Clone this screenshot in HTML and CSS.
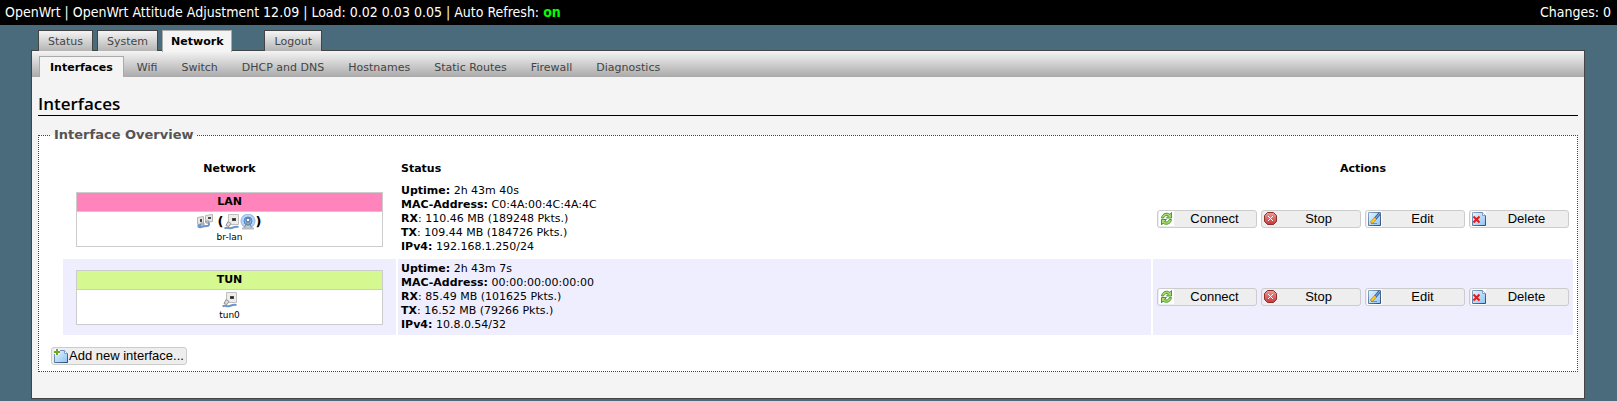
FILE: index.html
```
<!DOCTYPE html>
<html lang="en">
<head>
<meta charset="UTF-8">
<meta name="viewport" content="width=device-width, initial-scale=1.0">
<title>OpenWrt - Interfaces</title>
<link rel="stylesheet" href="styles.css">
</head>
<body>

<!-- icons -->
<svg class="defs" aria-hidden="true">
    <defs>
        <linearGradient id="sheet" x1="0" y1="0" x2="1" y2="1">
            <stop offset="0" stop-color="#e8f4fd"/>
            <stop offset="1" stop-color="#8cc4f4"/>
        </linearGradient>
        <linearGradient id="edge" x1="0" y1="0" x2="1" y2="1">
            <stop offset="0" stop-color="#8aa9cc"/>
            <stop offset="1" stop-color="#2d4a70"/>
        </linearGradient>
        <linearGradient id="red" x1="0" y1="0" x2="0" y2="1">
            <stop offset="0" stop-color="#ef9a96"/>
            <stop offset="1" stop-color="#cf3436"/>
        </linearGradient>
    </defs>
    <symbol id="reload" viewBox="0 0 16 16">
        <path fill="#fff" d="M0 0h15v15H0z"/>
        <path d="M2.500 7C3 3.500 6 1.500 9.500 2.500L11 3.500 12.500 1.500V7H7.500L9.500 5C7.500 4 5.500 4.500 4.500 7z" fill="#a5dc74" stroke="#4d9a2b"/>
        <path d="M12.500 8.500C12 12 9 14 5.500 13L4 12 2.500 14V8.500H7.500L5.500 10.500C7.500 11.500 9.500 11 10.500 8.500z" fill="#a5dc74" stroke="#4d9a2b"/>
    </symbol>
    <symbol id="stop" viewBox="0 0 16 16">
        <path d="M4.500 1.500h6l3 3v6l-3 3h-6l-3-3v-6z" fill="url(#red)" stroke="#8d3030"/>
        <path d="M5 5l5 5M10 5l-5 5" stroke="#fff"/>
    </symbol>
    <symbol id="edit" viewBox="0 0 16 16">
        <path fill="#fff" d="M0 0h15v16H0z"/>
        <path d="M1.500 1.500h12v13h-12z" fill="url(#sheet)" stroke="url(#edge)"/>
        <path d="M13 2L8 8" stroke="#3f6aa3" stroke-width="3"/>
        <path d="M13 2L8 8" stroke="#86b3e6"/>
        <path d="M8.500 7.500L4 12" stroke="#b67b15" stroke-width="3"/>
        <path d="M8.500 7.500L4.500 11.500" stroke="#ffc928" stroke-width="2"/>
        <path d="M4 12.500h6" stroke="#6d8fb5"/>
    </symbol>
    <symbol id="delete" viewBox="0 0 16 16">
        <path fill="#fff" d="M0 0h15v16H0z"/>
        <path d="M1.500 1.500h10l3 3v10h-13z" fill="url(#sheet)" stroke="url(#edge)"/>
        <path d="M11.500 1.500v3h3" fill="#fff" stroke="#7da0c8"/>
        <path d="M2.500 5.500l6 6M8.500 5.500l-6 6" stroke="#e01b1b" stroke-width="2"/>
    </symbol>
    <symbol id="add" viewBox="0 0 16 16">
        <path d="M1.500 2.500h10l3 3v9h-13z" fill="url(#sheet)" stroke="url(#edge)"/>
        <path d="M11.500 2.500v3h3" fill="#fff" stroke="#7da0c8"/>
        <path d="M4 1v6M1 4h6" stroke="#fff" stroke-width="4"/>
        <path d="M4 1v6M1 4h6" stroke="#6caa1f" stroke-width="2"/>
    </symbol>
    <symbol id="port" viewBox="0 0 16 16">
        <path d="M4.500.500h10v10h-10z" fill="#ececec" stroke="#c0c0c0"/>
        <path d="M8 4h4v3H8z" fill="#4b4b42"/>
        <path d="M9 5h2v1H9z" fill="#1b1b12"/>
        <path d="M4 7.500l3 2-2 3-3-1z" fill="#dcdcdc" stroke="#959595"/>
        <path d="M.500 14.500c3-2 4 .500 7-.500s4-1.500 7-1" fill="none" stroke="#6c95c9" stroke-width="2"/>
    </symbol>
    <symbol id="bridge" viewBox="0 0 16 16">
        <path d="M.500 3.500l6-1v7l-6 1zM8.500 1.500l7-1v7l-7 1z" fill="#e6e6e6" stroke="#b5b5b5"/>
        <path d="M3 5h2v3H3zM11 3h3v2h-3z" fill="#4b4b42"/>
        <path d="M4 9h3v2H4zM9 7h3v2H9z" fill="#ddd" stroke="#999"/>
        <path d="M4 11c-4 0-3 3 0 2s4-1 6-1 3-2 1-3" fill="none" stroke="#6c95c9" stroke-width="2"/>
    </symbol>
    <symbol id="wifi" viewBox="0 0 16 16">
        <circle cx="8" cy="7" r="7" fill="#b9d5f3" stroke="#8fb6e0"/>
        <circle cx="8" cy="7" r="4" fill="#89b3e3" stroke="#4f86c9"/>
        <circle cx="8" cy="6" r="2" fill="#fff" stroke="#2d62a8"/>
        <path d="M8 7L4 14M8 7l4 7M6 11h4" fill="none" stroke="#888"/>
        <path d="M2 14.500h12" stroke="#bbb" stroke-width="2"/>
    </symbol>
</svg>

<div class="header">
    <div>OpenWrt | OpenWrt Attitude Adjustment 12.09 | Load: 0.02 0.03 0.05 | Auto Refresh: <a href="#" class="refresh">on</a></div>
    <div>Changes: 0</div>
</div>

<ul class="mainmenu">
    <li><a href="#">Status</a></li>
    <li><a href="#">System</a></li>
    <li><a href="#" class="active">Network</a></li>
    <li class="logout"><a href="#">Logout</a></li>
</ul>

<div class="main">
    <ul class="submenu">
        <li><a href="#" class="active">Interfaces</a></li>
        <li><a href="#">Wifi</a></li>
        <li><a href="#">Switch</a></li>
        <li><a href="#">DHCP and DNS</a></li>
        <li><a href="#">Hostnames</a></li>
        <li><a href="#">Static Routes</a></li>
        <li><a href="#">Firewall</a></li>
        <li><a href="#">Diagnostics</a></li>
    </ul>

    <div class="content">
        <h2>Interfaces</h2>

        <fieldset>
            <legend>Interface Overview</legend>
            <table>
                <colgroup><col class="col-net"><col><col class="col-act"></colgroup>
                <tr>
                    <th>Network</th>
                    <th class="left">Status</th>
                    <th>Actions</th>
                </tr>
                <tr>
                    <td>
                        <div class="ifacebox">
                            <div class="ifacebox-head lan">LAN</div>
                            <div class="ifacebox-body">
                                <div class="devices"><svg><use href="#bridge"/></svg> <b>(</b><svg><use href="#port"/></svg><svg><use href="#wifi"/></svg><b>)</b></div>
                                <small>br-lan</small>
                            </div>
                        </div>
                    </td>
                    <td>
                        <b>Uptime:</b> 2h 43m 40s<br>
                        <b>MAC-Address:</b> C0:4A:00:4C:4A:4C<br>
                        <b>RX</b>: 110.46 MB (189248 Pkts.)<br>
                        <b>TX</b>: 109.44 MB (184726 Pkts.)<br>
                        <b>IPv4:</b> 192.168.1.250/24
                    </td>
                    <td>
                        <div class="actions">
                            <button type="button"><svg><use href="#reload"/></svg><span>Connect</span></button>
                            <button type="button"><svg><use href="#stop"/></svg><span>Stop</span></button>
                            <button type="button"><svg><use href="#edit"/></svg><span>Edit</span></button>
                            <button type="button"><svg><use href="#delete"/></svg><span>Delete</span></button>
                        </div>
                    </td>
                </tr>
                <tr class="alt">
                    <td>
                        <div class="ifacebox">
                            <div class="ifacebox-head tun">TUN</div>
                            <div class="ifacebox-body">
                                <div class="devices"><svg><use href="#port"/></svg></div>
                                <small>tun0</small>
                            </div>
                        </div>
                    </td>
                    <td>
                        <b>Uptime:</b> 2h 43m 7s<br>
                        <b>MAC-Address:</b> 00:00:00:00:00:00<br>
                        <b>RX</b>: 85.49 MB (101625 Pkts.)<br>
                        <b>TX</b>: 16.52 MB (79266 Pkts.)<br>
                        <b>IPv4:</b> 10.8.0.54/32
                    </td>
                    <td>
                        <div class="actions">
                            <button type="button"><svg><use href="#reload"/></svg><span>Connect</span></button>
                            <button type="button"><svg><use href="#stop"/></svg><span>Stop</span></button>
                            <button type="button"><svg><use href="#edit"/></svg><span>Edit</span></button>
                            <button type="button"><svg><use href="#delete"/></svg><span>Delete</span></button>
                        </div>
                    </td>
                </tr>
            </table>
            <button type="button" class="add"><svg><use href="#add"/></svg><span>Add new interface...</span></button>
        </fieldset>
    </div>
</div>

</body>
</html>
```
FILE: styles.css
```
body {
    margin: 0;
    background: #4a6b7c;
    color: #000;
    font: 11px/14px Verdana, "DejaVu Sans", sans-serif;
}
a {
    color: #444;
    text-decoration: none;
}
ul {
    display: flex;
    margin: 0;
    padding: 0;
    list-style: none;
}
svg {
    flex: none;
    width: 16px;
    height: 16px;
}
.defs {
    position: absolute;
    width: 0;
    height: 0;
}

/* header */
.header {
    display: flex;
    justify-content: space-between;
    padding: 0 6px 0 5px;
    background: #000;
    color: #fff;
    font: 14px/25px Tahoma, "DejaVu Sans Condensed", sans-serif;
}
.header .refresh {
    color: #0f0;
    font-weight: bold;
}

/* menus */
.mainmenu {
    position: relative;
    gap: 4px;
    margin: 5px 38px 0;
}
.mainmenu a {
    display: block;
    height: 20px;
    padding: 0 9px;
    border: 1px solid #444;
    border-bottom: 0;
    background: linear-gradient(#f4f4f4, #b4b4b4);
    line-height: 21px;
}
.mainmenu .active {
    margin-bottom: -1px;
    padding: 0 8px 1px;
    border-color: #aaa;
    background: #f4f4f4;
    color: #000;
    font-weight: bold;
}
.mainmenu .logout {
    margin-left: 28px;
}
.submenu {
    padding: 5px 7px 0;
    background: linear-gradient(#f4f4f4, #aaa);
}
.submenu a {
    display: block;
    height: 20px;
    padding: 0 8px;
    margin-right: 6px;
    border: 1px solid transparent;
    border-bottom: 0;
    line-height: 21px;
}
.submenu .active {
    margin-right: 4px;
    padding: 0 10px;
    border-color: #aaa;
    background: #f4f4f4;
    color: #000;
    font-weight: bold;
}

/* page */
.main {
    margin: -1px 32px 2px 31px;
    border: 1px solid #444;
    background: #f4f4f4;
}
.content {
    padding: 16px 6px 26px;
}
h2 {
    margin: 0 0 11px;
    border-bottom: 1px solid #000;
    font: 600 17px/22px "Trebuchet MS", "Open Sans", sans-serif;
}
fieldset {
    min-width: 0;
    margin: 0;
    padding: 5px 2px 6px 12px;
    border: 1px dotted #444;
    background: #fff;
}
legend {
    padding: 0 3px;
    color: #555;
    font-size: 13px;
    font-weight: bold;
    line-height: 16px;
}

/* interfaces */
table {
    width: 100%;
    padding-left: 10px;
    border-spacing: 2px;
    table-layout: fixed;
}
.col-net {
    width: 333px;
}
.col-act {
    width: 420px;
}
th {
    padding: 12px 3px 3px;
}
td {
    padding: 3px;
}
.left {
    text-align: left;
}
.alt td {
    background: #eef;
}
.ifacebox {
    margin: 0 10px;
    border: 1px solid #ccc;
    background: #fff;
    text-align: center;
}
.ifacebox-head {
    border-bottom: 1px solid #ccc;
    font-weight: bold;
    line-height: 18px;
}
.lan {
    background: #ff84bb;
}
.tun {
    background: #d6f890;
}
.ifacebox-body {
    padding: 2px 0;
}
.devices {
    height: 17px;
    font-size: 13px;
    line-height: 16px;
}
.devices svg {
    vertical-align: top;
}
small {
    display: block;
    font-size: 9px;
    line-height: 13px;
}
.actions {
    display: flex;
    justify-content: center;
    gap: 4px;
}
button {
    display: flex;
    align-items: center;
    width: 100px;
    height: 18px;
    padding: 0 2px 0 1px;
    border: 1px solid #ccc;
    border-radius: 3px;
    background: #eee;
    color: #000;
    font: 13px/16px Arial, "Liberation Sans", sans-serif;
}
button span {
    flex: 1;
    text-align: center;
}
.add {
    width: auto;
    margin-top: 10px;
}
```
